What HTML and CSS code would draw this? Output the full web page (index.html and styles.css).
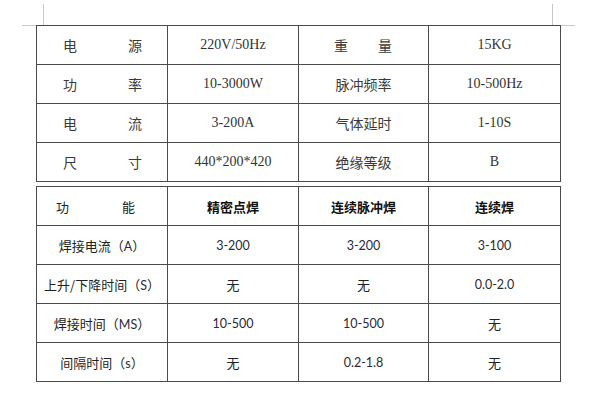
FILE: index.html
```html
<!DOCTYPE html>
<html lang="zh">
<head>
<meta charset="utf-8">
<link rel="stylesheet" href="styles.css">
</head>
<body>
<div class="page">
  <table class="spec">
    <colgroup><col class="c1"><col class="c2"><col class="c3"><col class="c4"></colgroup>
    <tr>
      <td><div class="spread s1"><span>电</span><span>源</span></div></td>
      <td class="num">220V/50Hz</td>
      <td><div class="spread s2"><span>重</span><span>量</span></div></td>
      <td class="num">15KG</td>
    </tr>
    <tr>
      <td><div class="spread s1"><span>功</span><span>率</span></div></td>
      <td class="num">10-3000W</td>
      <td>脉冲频率</td>
      <td class="num">10-500Hz</td>
    </tr>
    <tr>
      <td><div class="spread s1"><span>电</span><span>流</span></div></td>
      <td class="num">3-200A</td>
      <td>气体延时</td>
      <td class="num">1-10S</td>
    </tr>
    <tr>
      <td><div class="spread s1"><span>尺</span><span>寸</span></div></td>
      <td class="num">440*200*420</td>
      <td>绝缘等级</td>
      <td class="num">B</td>
    </tr>
  </table>
  <table class="func">
    <colgroup><col class="c1"><col class="c2"><col class="c3"><col class="c4"></colgroup>
    <tr class="head">
      <td><div class="spread s3"><span>功</span><span>能</span></div></td>
      <th>精密点焊</th>
      <th>连续脉冲焊</th>
      <th>连续焊</th>
    </tr>
    <tr>
      <td>焊接电流（<span class="lat">A</span>）</td>
      <td class="lat">3-200</td>
      <td class="lat">3-200</td>
      <td class="lat">3-100</td>
    </tr>
    <tr>
      <td>上升/下降时间（<span class="lat">S</span>）</td>
      <td>无</td>
      <td>无</td>
      <td class="lat">0.0-2.0</td>
    </tr>
    <tr>
      <td>焊接时间（<span class="lat">MS</span>）</td>
      <td class="lat">10-500</td>
      <td class="lat">10-500</td>
      <td>无</td>
    </tr>
    <tr>
      <td>间隔时间（<span class="lat">s</span>）</td>
      <td>无</td>
      <td class="lat">0.2-1.8</td>
      <td>无</td>
    </tr>
  </table>
</div>
</body>
</html>
```

FILE: styles.css
```css
html, body {
  margin: 0;
  padding: 0;
  background: #ffffff;
}

.page {
  position: relative;
  width: 600px;
  height: 407px;
  padding: 25px 0 0 36px;
  box-sizing: border-box;
}

/* page corner marks */
.page::before,
.page::after {
  content: "";
  position: absolute;
  top: 4px;
  height: 21px;
}
.page::before {
  left: 22px;
  width: 21px;
  border-right: 1px solid #c8c8c8;
  border-bottom: 1px solid #c8c8c8;
}
.page::after {
  left: 552px;
  width: 22px;
  border-left: 1px solid #c8c8c8;
  border-bottom: 1px solid #c8c8c8;
}

table {
  border-collapse: collapse;
  table-layout: fixed;
  width: 525px;
  position: relative;
  z-index: 1;
  background: #fff;
}

col.c1 { width: 131px; }
col.c2 { width: 131px; }
col.c3 { width: 130px; }
col.c4 { width: 132px; }

td, th {
  border: 1px solid #4a4a4a;
  text-align: center;
  vertical-align: middle;
  padding: 0;
  height: 38px;
  white-space: nowrap;
}

table.spec {
  border: 1.5px solid #555;
}
table.spec td {
  font-family: "Liberation Serif", "Noto Sans CJK SC", serif;
  font-size: 14px;
  color: #3a3a3a;
}
table.spec td.num {
  font-family: "Liberation Serif", serif;
  font-size: 14px;
  color: #333;
}

table.func {
  margin-top: 4px;
  border: 1.5px solid #555;
}
table.func td, table.func th {
  font-family: "Noto Sans CJK SC", sans-serif;
  font-size: 13px;
  color: #222;
  font-weight: normal;
}
table.func th {
  font-weight: bold;
  color: #111;
}
table.func .lat {
  font-family: "Lato", "Liberation Sans", sans-serif;
  font-size: 12.5px;
  color: #2a2a3a;
}

.spread {
  display: flex;
  justify-content: space-between;
}
.spread.s1 { padding: 0 25px 0 26px; }
.spread.s2 { padding: 0 36px 0 35px; }
.spread.s3 { padding: 0 32px 0 19px; }
```
